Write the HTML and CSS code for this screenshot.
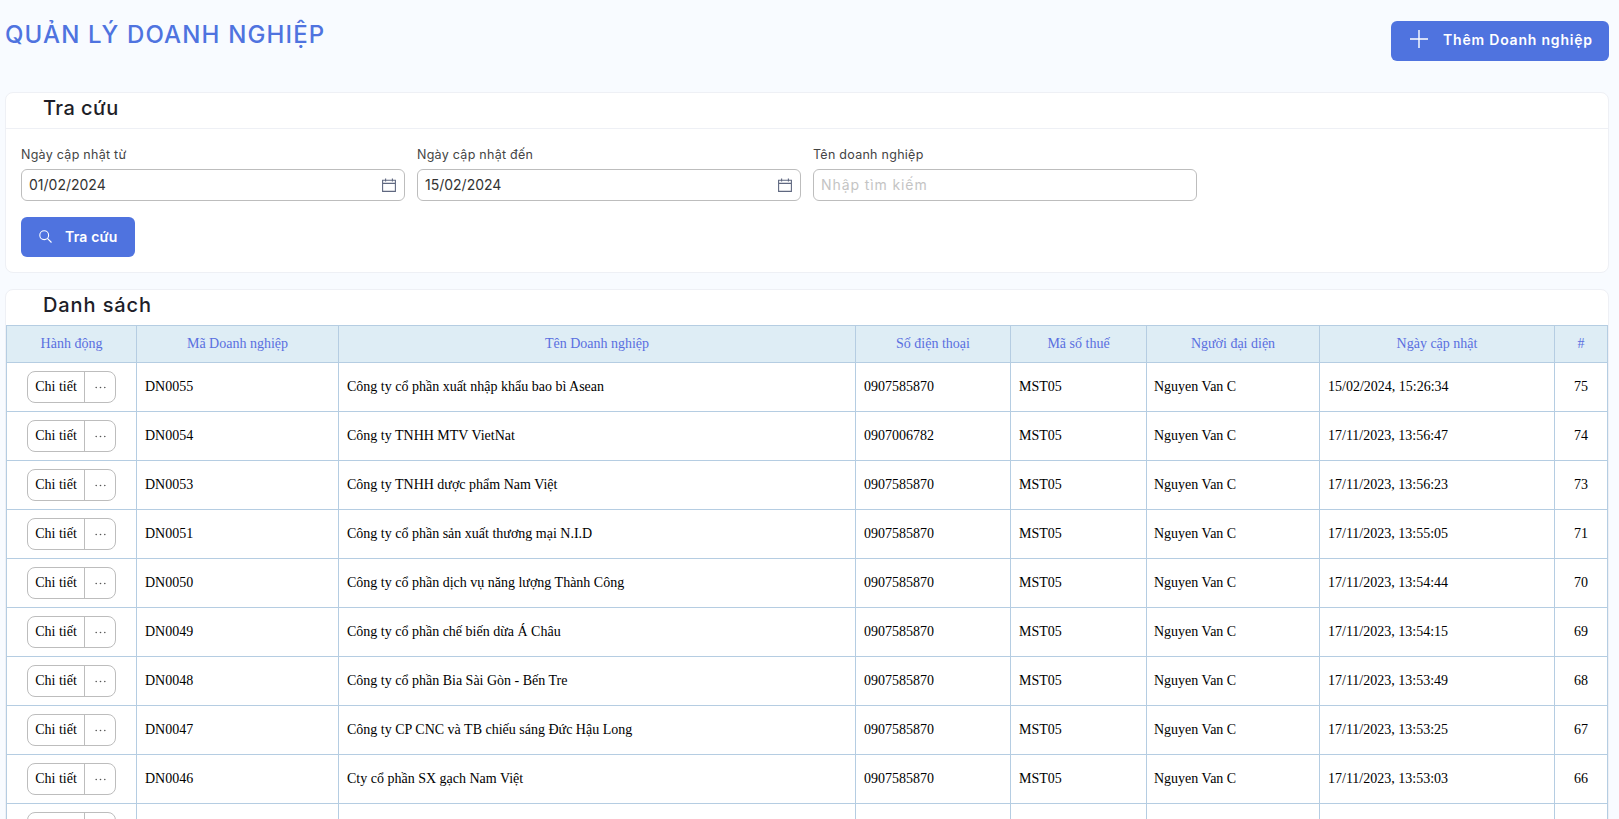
FILE: index.html
```html
<!DOCTYPE html>
<html lang="vi">
<head>
    <meta charset="UTF-8">
    <meta name="viewport" content="width=device-width, initial-scale=1.0">
    <title>Quản lý doanh nghiệp</title>
    <link rel="stylesheet" href="styles.css">
</head>
<body>
    <div class="page">
        <div class="page-header">
            <h1 class="page-title">QUẢN LÝ DOANH NGHIỆP</h1>
            <button class="btn-primary btn-add">
                <svg class="icon-plus" viewBox="0 0 18 18" width="18" height="18"><path d="M9 0v18M0 9h18" fill="none" stroke="#fff" stroke-width="1.4"/></svg>
                <span>Thêm Doanh nghiệp</span>
            </button>
        </div>

        <div class="card">
            <div class="card-title bordered title-search">Tra cứu</div>
            <div class="search-body">
                <div class="search-fields">
                    <div class="field">
                        <label>Ngày cập nhật từ</label>
                        <div class="input-wrap">
                            <input type="text" value="01/02/2024">
                            <svg class="icon-calendar" viewBox="0 0 14 14" width="14" height="14"><path d="M.6 2.2h12.8v11.2H.6zM.6 5.4h12.8M3.6 .4v3M10.4 .4v3" fill="none" stroke="#5f6880" stroke-width="1.1"/></svg>
                        </div>
                    </div>
                    <div class="field">
                        <label>Ngày cập nhật đến</label>
                        <div class="input-wrap">
                            <input type="text" value="15/02/2024">
                            <svg class="icon-calendar" viewBox="0 0 14 14" width="14" height="14"><path d="M.6 2.2h12.8v11.2H.6zM.6 5.4h12.8M3.6 .4v3M10.4 .4v3" fill="none" stroke="#5f6880" stroke-width="1.1"/></svg>
                        </div>
                    </div>
                    <div class="field">
                        <label>Tên doanh nghiệp</label>
                        <div class="input-wrap">
                            <input type="text" placeholder="Nhập tìm kiếm">
                        </div>
                    </div>
                </div>
                <button class="btn-primary btn-search">
                    <svg viewBox="0 0 13 13" width="13" height="13"><circle cx="5.2" cy="5.2" r="4.4" fill="none" stroke="#fff" stroke-width="1.1"/><path d="M8.4 8.4l4.1 4.1" fill="none" stroke="#fff" stroke-width="1.1"/></svg>
                    <span>Tra cứu</span>
                </button>
            </div>
        </div>

        <div class="card list-card">
            <div class="card-title title-list">Danh sách</div>
            <table class="data-table">
                <colgroup>
                    <col class="col-action">
                    <col class="col-code">
                    <col class="col-name">
                    <col class="col-phone">
                    <col class="col-tax">
                    <col class="col-person">
                    <col class="col-date">
                    <col class="col-index">
                </colgroup>
                <thead>
                    <tr>
                        <th>Hành động</th>
                        <th>Mã Doanh nghiệp</th>
                        <th>Tên Doanh nghiệp</th>
                        <th>Số điện thoại</th>
                        <th>Mã số thuế</th>
                        <th>Người đại diện</th>
                        <th>Ngày cập nhật</th>
                        <th>#</th>
                    </tr>
                </thead>
                <tbody id="rows"></tbody>
            </table>
        </div>
    </div>
    <script>
        const ROWS = [
            ['DN0055', 'Công ty cổ phần xuất nhập khẩu bao bì Asean', '0907585870', 'MST05', 'Nguyen Van C', '15/02/2024, 15:26:34', '75'],
            ['DN0054', 'Công ty TNHH MTV VietNat', '0907006782', 'MST05', 'Nguyen Van C', '17/11/2023, 13:56:47', '74'],
            ['DN0053', 'Công ty TNHH dược phẩm Nam Việt', '0907585870', 'MST05', 'Nguyen Van C', '17/11/2023, 13:56:23', '73'],
            ['DN0051', 'Công ty cổ phần sản xuất thương mại N.I.D', '0907585870', 'MST05', 'Nguyen Van C', '17/11/2023, 13:55:05', '71'],
            ['DN0050', 'Công ty cổ phần dịch vụ năng lượng Thành Công', '0907585870', 'MST05', 'Nguyen Van C', '17/11/2023, 13:54:44', '70'],
            ['DN0049', 'Công ty cổ phần chế biến dừa Á Châu', '0907585870', 'MST05', 'Nguyen Van C', '17/11/2023, 13:54:15', '69'],
            ['DN0048', 'Công ty cổ phần Bia Sài Gòn - Bến Tre', '0907585870', 'MST05', 'Nguyen Van C', '17/11/2023, 13:53:49', '68'],
            ['DN0047', 'Công ty CP CNC và TB chiếu sáng Đức Hậu Long', '0907585870', 'MST05', 'Nguyen Van C', '17/11/2023, 13:53:25', '67'],
            ['DN0046', 'Cty cổ phần SX gạch Nam Việt', '0907585870', 'MST05', 'Nguyen Van C', '17/11/2023, 13:53:03', '66'],
            ['', '', '', '', '', '', '']
        ];
        const ACTIONS = `<div class="action-group"><button class="action-detail">Chi tiết</button><button class="action-more"><svg viewBox="0 0 11 3" width="11" height="3"><circle cx="1.2" cy="1.5" r=".8"/><circle cx="5.5" cy="1.5" r=".8"/><circle cx="9.8" cy="1.5" r=".8"/></svg></button></div>`;

        document.getElementById('rows').innerHTML = ROWS.map(row => {
            const cells = row.map((value, i) => `<td${i === 6 ? ' class="center"' : ''}>${value}</td>`).join('');
            return `<tr><td class="center">${ACTIONS}</td>${cells}</tr>`;
        }).join('');
    </script>
</body>
</html>
```

FILE: styles.css
```css
* {
    box-sizing: border-box;
}

html, body {
    margin: 0;
    height: 100%;
    overflow: hidden;
}

body {
    background-color: #f8fbff;
    font-family: Inter, "Noto Sans", sans-serif;
    color: #222;
}

.page {
    padding: 21px 10px 0 5px;
}

.page-header {
    display: flex;
    justify-content: space-between;
    align-items: flex-start;
    margin-bottom: 31px;
}

.page-title {
    margin: 0;
    font-size: 24px;
    line-height: 28px;
    font-weight: 500;
    color: #4f73df;
    letter-spacing: 1.15px;
}

.btn-primary {
    display: flex;
    align-items: center;
    border: 0;
    border-radius: 6px;
    background-color: #4f73df;
    color: #fff;
    font-family: inherit;
    font-size: 14px;
    font-weight: 600;
    height: 40px;
    cursor: pointer;
}

.btn-add {
    width: 218px;
    padding: 0 0 4px 19px;
    gap: 15px;
    letter-spacing: 0.8px;
}

.btn-search {
    width: 114px;
    padding: 0 0 2px 18px;
    gap: 13px;
    letter-spacing: 0.2px;
}

.card {
    background-color: #fff;
    border: 1px solid #eef0f5;
    border-radius: 8px;
    overflow: hidden;
}

.list-card {
    margin-top: 16px;
}

.card-title {
    padding: 0 0 4px 37px;
    font-size: 20px;
    line-height: 31px;
    font-weight: 500;
    color: #1e1e28;
}

.title-search {
    letter-spacing: 0.45px;
}

.title-list {
    letter-spacing: 0.9px;
}

.card-title.bordered {
    border-bottom: 1px solid #eef0f5;
}

.search-body {
    padding: 13px 15px 15px;
}

.search-fields {
    display: grid;
    grid-template-columns: repeat(3, 384px);
    gap: 12px;
    margin-bottom: 16px;
}

.field label {
    display: block;
    font-size: 12.5px;
    line-height: 25px;
    padding-bottom: 2px;
    letter-spacing: 0.27px;
    color: #444;
}

.input-wrap {
    position: relative;
}

.input-wrap input {
    display: block;
    width: 100%;
    height: 32px;
    padding: 0 7px 2px;
    border: 1px solid #bdbdbd;
    border-radius: 6px;
    font-family: inherit;
    font-size: 14px;
    color: #333;
    background-color: #fff;
}

.input-wrap input::placeholder {
    color: #c4c4c4;
    letter-spacing: 0.9px;
}

.icon-calendar {
    position: absolute;
    top: 9px;
    right: 9px;
}

.data-table {
    width: 1602px;
    table-layout: fixed;
    border-collapse: collapse;
    font-family: "Liberation Serif", "Times New Roman", serif;
    font-size: 14px;
    color: #000;
}

.col-action { width: 130px; }
.col-code { width: 202px; }
.col-name { width: 517px; }
.col-phone { width: 155px; }
.col-tax { width: 136px; }
.col-person { width: 173px; }
.col-date { width: 235px; }
.col-index { width: 53px; }

.data-table th,
.data-table td {
    border: 1px solid #b5cde2;
    padding: 0 8px;
}

.data-table th {
    height: 37px;
    background-color: #deedf5;
    color: #5a6fe0;
    font-weight: normal;
    text-align: center;
}

.data-table td {
    height: 49px;
}

.data-table td:nth-child(6) {
    padding-left: 7px;
}

.data-table td.center {
    text-align: center;
}

.action-group {
    display: inline-flex;
    height: 32px;
    width: 89px;
    vertical-align: middle;
    border: 1px solid #bdbdbd;
    border-radius: 8px;
}

.action-group button {
    border: 0;
    background: transparent;
    padding: 0;
    font-family: inherit;
    font-size: 14px;
    color: #000;
    cursor: pointer;
}

.action-detail {
    width: 57px;
    border-right: 1px solid #bdbdbd !important;
}

.action-more {
    flex: 1;
    display: flex;
    align-items: center;
    justify-content: center;
}

.action-more svg {
    fill: #555;
}
```
